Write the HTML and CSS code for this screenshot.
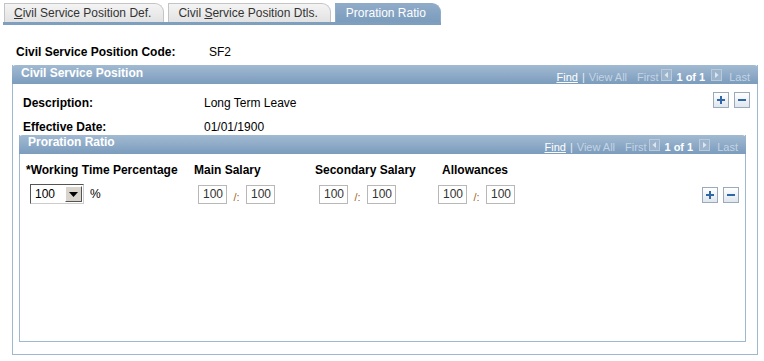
FILE: index.html
```html
<!DOCTYPE html>
<html lang="en">
<head>
    <meta charset="UTF-8">
    <title>Proration Ratio</title>
    <link rel="stylesheet" href="styles.css">
</head>
<body>

    <!-- onglets -->
    <div class="tabs">
        <div class="tab"><u>C</u>ivil Service Position Def.</div>
        <div class="tab">Civil <u>S</u>ervice Position Dtls.</div>
        <div class="tab active">Proration Ratio</div>
    </div>

    <div class="code-row">
        <span class="label code-label">Civil Service Position Code:</span>
        <span>SF2</span>
    </div>

    <div class="group outer">
        <div class="group-head">
            <span class="group-title">Civil Service Position</span>
            <span class="nav">
                <a class="find">Find</a><span class="sep">|</span><span class="dim">View All</span>
                <span class="dim first">First</span>
                <svg class="arrow" width="11" height="12" viewBox="0 0 11 12"><rect x="0.5" y="0.5" width="10" height="11" fill="#9cb5cd" stroke="#b9cadb"/><path d="M7 3 L3.5 6 L7 9 Z" fill="#dde6ef"/></svg>
                <b>1 of 1</b>
                <svg class="arrow" width="11" height="12" viewBox="0 0 11 12"><rect x="0.5" y="0.5" width="10" height="11" fill="#9cb5cd" stroke="#b9cadb"/><path d="M4 3 L7.5 6 L4 9 Z" fill="#dde6ef"/></svg>
                <span class="dim last">Last</span>
            </span>
        </div>

        <div class="outer-body">
            <div class="info">
                <span class="label">Description:</span><span>Long Term Leave</span>
                <span class="label">Effective Date:</span><span>01/01/1900</span>
            </div>
            <div class="row-btns top-btns">
                <span class="btn"><svg width="14" height="14" viewBox="0 0 14 14"><path d="M7 3 V11 M3 7 H11" stroke="#2f67a6" stroke-width="2"/></svg></span>
                <span class="btn"><svg width="14" height="14" viewBox="0 0 14 14"><path d="M3 7 H11" stroke="#2f67a6" stroke-width="2"/></svg></span>
            </div>
        </div>

        <div class="group inner">
            <div class="group-head">
                <span class="group-title">Proration Ratio</span>
                <span class="nav">
                    <a class="find">Find</a><span class="sep">|</span><span class="dim">View All</span>
                    <span class="dim first">First</span>
                    <svg class="arrow" width="11" height="12" viewBox="0 0 11 12"><rect x="0.5" y="0.5" width="10" height="11" fill="#9cb5cd" stroke="#b9cadb"/><path d="M7 3 L3.5 6 L7 9 Z" fill="#dde6ef"/></svg>
                    <b>1 of 1</b>
                    <svg class="arrow" width="11" height="12" viewBox="0 0 11 12"><rect x="0.5" y="0.5" width="10" height="11" fill="#9cb5cd" stroke="#b9cadb"/><path d="M4 3 L7.5 6 L4 9 Z" fill="#dde6ef"/></svg>
                    <span class="dim last">Last</span>
                </span>
            </div>

            <div class="ratio-grid">
                <span class="label">*Working Time Percentage</span>
                <span class="label">Main Salary</span>
                <span class="label">Secondary Salary</span>
                <span class="label">Allowances</span>
                <span></span>

                <span class="pct">
                    <span class="select"><span class="select-val">100</span><span class="drop"><svg width="9" height="5" viewBox="0 0 9 5"><path d="M0 0 H9 L4.5 5 Z" fill="#000"/></svg></span></span>
                    %
                </span>
                <span class="pair"><span class="box">100</span><span class="slash">/:</span><span class="box">100</span></span>
                <span class="pair"><span class="box">100</span><span class="slash">/:</span><span class="box">100</span></span>
                <span class="pair pair-left"><span class="box">100</span><span class="slash">/:</span><span class="box">100</span></span>
                <span class="row-btns">
                    <span class="btn"><svg width="14" height="14" viewBox="0 0 14 14"><path d="M7 3 V11 M3 7 H11" stroke="#2f67a6" stroke-width="2"/></svg></span>
                    <span class="btn"><svg width="14" height="14" viewBox="0 0 14 14"><path d="M3 7 H11" stroke="#2f67a6" stroke-width="2"/></svg></span>
                </span>
            </div>
        </div>
    </div>

</body>
</html>
```

FILE: styles.css
```css
body {
    font-family: "Liberation Sans", Arial, sans-serif;
    font-size: 12px;
    color: #000;
    margin: 0;
    padding: 3px 0 0 0;
    background: #fff;
}

.tabs {
    display: flex;
    width: 437px;
    margin-left: 3px;
    padding-left: 1px;
    border-bottom: 3px solid #7f9fbf;
}

.tab {
    height: 18px;
    line-height: 19px;
    padding: 0 12px 0 9px;
    margin-right: 4px;
    background: linear-gradient(#f4f4f4, #e2e2e2);
    border: 1px solid #c4c4c4;
    border-bottom: none;
    border-radius: 0 9px 0 0;
    color: #333;
}

    .tab.active {
        background: linear-gradient(#8fabc8, #7b9cbd);
        border-color: #8fabc8;
        color: #fff;
        padding: 0 11px 0 10px;
        margin-right: 0;
        flex: 1;
    }

.label {
    font-weight: bold;
    color: #000;
}

.code-row {
    display: flex;
    margin: 20px 0 0 16px;
    height: 15px;
}

.code-label {
    width: 193px;
}

.group {
    border: 1px solid #9fb8d2;
    border-top: none;
}

.outer {
    margin: 5px 0 0 12px;
    width: 744px;
    height: 289px;
}

.inner {
    margin: 0 0 0 6px;
    width: 725px;
    height: 206px;
}

.group-head {
    display: flex;
    justify-content: space-between;
    align-items: center;
    height: 19px;
    background: linear-gradient(#a2bad2, #7b9cbd);
    border-radius: 4px 4px 0 0;
    margin: 0 -1px;
    color: #fff;
}

.group-title {
    font-weight: bold;
    padding-left: 9px;
    margin-top: -4px;
}

.inner .group-title {
    margin-top: -5px;
}

.nav {
    display: flex;
    align-items: center;
    font-size: 11px;
    padding-right: 8px;
    margin-top: 4px;
}

    .nav b {
        margin: 0 6px 0 4px;
    }

.find {
    text-decoration: underline;
    color: #fff;
}

.sep {
    margin: 0 4px;
    color: #e6edf4;
}

.dim {
    color: #c5d4e3;
}

.first {
    margin: 0 3px 0 10px;
}

.last {
    margin-left: 7px;
}

.arrow {
    margin-top: -4px;
}

.outer-body {
    display: flex;
    justify-content: space-between;
    padding: 12px 0 0 10px;
    height: 39px;
}

.info {
    display: grid;
    grid-template-columns: 181px auto;
    row-gap: 8px;
    line-height: 15px;
}

.row-btns {
    display: flex;
    gap: 5px;
}

.top-btns {
    padding-right: 7px;
    margin-top: -4px;
}

.btn {
    display: block;
    width: 14px;
    height: 14px;
    border: 1px solid #9aaabb;
    background: linear-gradient(#ffffff, #dfe6ee);
}

    .btn svg {
        display: block;
    }

.ratio-grid {
    display: grid;
    grid-template-columns: 168px 121px 127px 247px auto;
    grid-template-rows: 16px 22px;
    row-gap: 5px;
    padding: 8px 0 0 6px;
    align-items: center;
}

.pct {
    display: flex;
    align-items: center;
    gap: 6px;
    padding-left: 4px;
}

.select {
    display: flex;
    width: 52px;
    height: 18px;
    border: 1px solid #555;
    border-right-color: #ccc;
    border-bottom-color: #ccc;
    background: #fff;
}

.select-val {
    flex: 1;
    padding: 2px 0 0 4px;
}

.drop {
    display: flex;
    align-items: center;
    justify-content: center;
    width: 15px;
    margin: 1px;
    background: #d8d4cc;
    border: 1px solid;
    border-color: #fff #555 #555 #fff;
}

.pair {
    display: flex;
    align-items: center;
    padding-left: 4px;
}

.pair-left {
    padding-left: 0;
    margin-left: -4px;
}

.box {
    width: 24px;
    height: 17px;
    line-height: 17px;
    padding-right: 3px;
    border: 1px solid #b8b8b8;
    text-align: right;
    color: #333;
}

.slash {
    width: 19px;
    text-align: center;
    color: #a0662a;
    font-size: 11px;
    padding-top: 5px;
}

.ratio-grid .row-btns {
    padding-left: 13px;
    margin-top: 2px;
}
```
